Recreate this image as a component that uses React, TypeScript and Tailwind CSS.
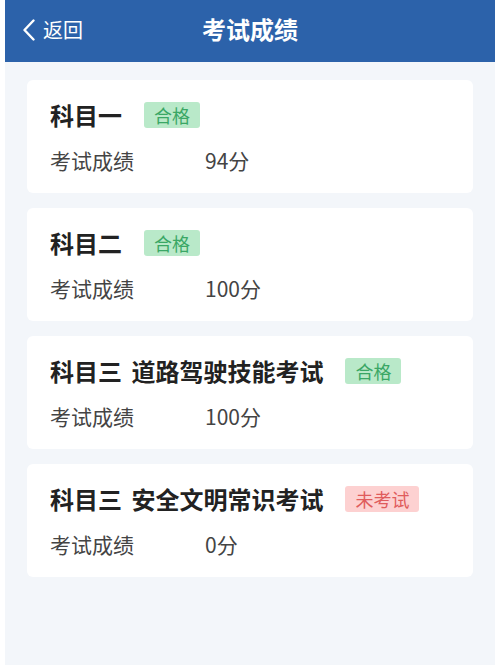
import React from "react";

type Item = { title: string; status: string; pass: boolean; score: string };

const items: Item[] = [
  { title: "科目一", status: "合格", pass: true, score: "94分" },
  { title: "科目二", status: "合格", pass: true, score: "100分" },
  { title: "科目三 道路驾驶技能考试", status: "合格", pass: true, score: "100分" },
  { title: "科目三 安全文明常识考试", status: "未考试", pass: false, score: "0分" },
];

export default function App() {
  return (
    <div
      className="w-[500px] h-[666px] bg-white overflow-hidden"
      style={{ fontFamily: '"Noto Sans CJK SC", "Noto Sans", sans-serif' }}
    >
      <div className="mx-[5px] h-[665px] bg-[#f3f6fa] flex flex-col">
        <div className="h-[62px] bg-[#2c62aa] flex items-center relative">
          <div className="flex items-center pl-[17px] pb-[2px]">
            <svg width="14" height="22" viewBox="0 0 14 22" className="text-white">
              <path d="M11.5 1.5 L2.5 11 L11.5 20.5" fill="none" stroke="currentColor" strokeWidth="2.4" strokeLinecap="round" strokeLinejoin="round" />
            </svg>
            <span className="ml-[7px] text-[20px] leading-none text-white">返回</span>
          </div>
          <div className="absolute left-0 right-0 top-0 h-[62px] flex items-center justify-center pointer-events-none pb-[4px]">
            <span className="text-[24px] leading-none font-bold text-white">考试成绩</span>
          </div>
        </div>
        <div className="flex flex-col gap-[15px] px-[22px] pt-[18px]">
          {items.map((it, i) => (
            <div key={i} className="h-[113px] bg-white rounded-[6px] pl-[23px] flex flex-col">
              <div className="mt-[22px] h-[26px] flex items-center">
                <span className="text-[24px] leading-none font-bold text-[#222222] [word-spacing:4px]">{it.title}</span>
                <span
                  className={
                    it.pass
                      ? "ml-[22px] h-[26px] px-[10px] flex items-center rounded-[3px] bg-[#b9e9c9] text-[#3aa765] text-[18px] leading-none"
                      : "ml-[22px] h-[26px] px-[10px] flex items-center rounded-[3px] bg-[#fdd1d1] text-[#e05c5c] text-[18px] leading-none"
                  }
                >
                  {it.status}
                </span>
              </div>
              <div className="mt-[19px] h-[26px] flex items-center text-[21px] leading-none text-[#444444]">
                <span className="w-[155px]">考试成绩</span>
                <span>{it.score}</span>
              </div>
            </div>
          ))}
        </div>
      </div>
    </div>
  );
}
